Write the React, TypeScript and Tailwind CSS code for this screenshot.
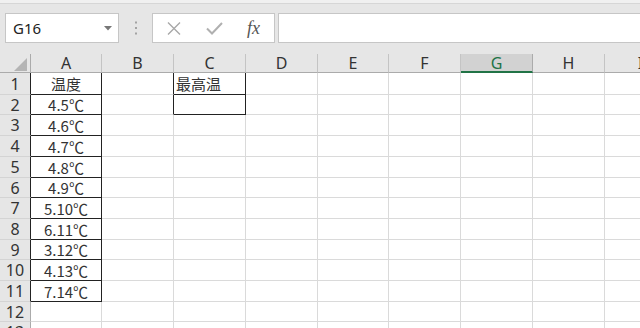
import React from "react";

const colWidths = [71, 72, 72, 72, 71, 72, 72, 72, 72];
const colNames = ["A", "B", "C", "D", "E", "F", "G", "H", "I"];
const rowHeights = [22, 20, 21, 21, 21, 20, 21, 21, 20, 21, 21, 20, 21];
const aVals = ["温度", "4.5℃", "4.6℃", "4.7℃", "4.8℃", "4.9℃", "5.10℃", "6.11℃", "3.12℃", "4.13℃", "7.14℃"];

const cellFont = { fontFamily: '"Noto Sans CJK SC", "Noto Sans", sans-serif' };

function Toolbar() {
  return (
    <div className="h-[54px] bg-[#e6e6e6] flex flex-col">
      <div className="h-[4px] bg-[#f0f0f0] border-b border-[#d6d6d6]" />
      <div className="flex items-start pt-[9px] pl-[5px]">
        <div className="w-[114px] h-[30px] bg-white border border-[#c6c6c6] flex items-center justify-between pl-[7px] pr-[6px]">
          <span className="text-[15px] text-[#222]" style={{ fontFamily: '"Noto Sans", sans-serif' }}>G16</span>
          <svg width="8" height="5" viewBox="0 0 8 5"><path d="M0 0 L8 0 L4 4.5 Z" fill="#777" /></svg>
        </div>
        <div className="w-[33px] h-[30px] flex items-center justify-center">
          <svg width="4" height="14" viewBox="0 0 4 14">
            <rect x="1" y="0.5" width="2" height="2" fill="#a3a3a3" />
            <rect x="1" y="6" width="2" height="2" fill="#a3a3a3" />
            <rect x="1" y="11.5" width="2" height="2" fill="#a3a3a3" />
          </svg>
        </div>
        <div className="w-[123px] h-[30px] bg-white border border-[#c6c6c6] flex items-center">
          <svg className="ml-[14px]" width="14" height="13" viewBox="0 0 14 13">
            <path d="M1 0.5 L13 12.5 M13 0.5 L1 12.5" stroke="#a8a8a8" strokeWidth="1.4" fill="none" />
          </svg>
          <svg className="ml-[25px]" width="17" height="13" viewBox="0 0 17 13">
            <path d="M1 6.5 L6 11.5 L16 1" stroke="#b0b0b0" strokeWidth="2" fill="none" />
          </svg>
          <span className="ml-[24px] text-[18px] italic text-[#555] leading-none" style={{ fontFamily: '"Liberation Serif", serif' }}>fx</span>
        </div>
        <div className="ml-[3px] flex-1 h-[30px] bg-white border border-r-0 border-[#c6c6c6]" />
      </div>
    </div>
  );
}

function HeaderRow() {
  return (
    <div className="flex h-[19px] bg-[#e6e6e6] w-[680px]">
      <div className="w-[31px] shrink-0 h-full border-r border-b border-[#ababab] flex items-end justify-end pr-[3px] pb-[1px]">
        <svg width="13" height="13" viewBox="0 0 13 13"><path d="M13 0 L13 13 L0 13 Z" fill="#b4b4b4" /></svg>
      </div>
      {colNames.map((c, i) => {
        const sel = c === "G";
        return (
          <div
            key={c}
            className={
              sel
                ? "shrink-0 h-full bg-[#d2d2d2] border-r border-[#ababab] border-b-2 border-b-[#217346] flex items-center justify-center text-[16px] text-[#217346]"
                : "shrink-0 h-full border-r border-[#c4c4c4] border-b border-b-[#ababab] flex items-center justify-center text-[16px] text-[#333]"
            }
            style={{ width: colWidths[i], fontFamily: '"Noto Sans", sans-serif' }}
          >
            <span className="leading-none">{c}</span>
          </div>
        );
      })}
    </div>
  );
}

function GridRow({ r }: { r: number }) {
  const h = rowHeights[r];
  const inA = r < 11;
  return (
    <div className="flex w-[680px] shrink-0" style={{ height: h }}>
      <div
        className={
          "w-[31px] shrink-0 h-full bg-[#e6e6e6] border-b border-b-[#d4d4d4] border-r flex items-center justify-center text-[16px] text-[#333] " +
          (inA ? "border-r-[#222]" : "border-r-[#ababab]")
        }
        style={{ fontFamily: '"Noto Sans", sans-serif' }}
      >
        <span className="leading-none">{r + 1}</span>
      </div>
      {colNames.map((c, i) => {
        let rb = "border-r-[#dadada]";
        let bb = "border-b-[#dadada]";
        if (c === "A" && inA) {
          rb = "border-r-[#222]";
          bb = "border-b-[#222]";
        }
        if (c === "B" && r < 2) rb = "border-r-[#222]";
        if (c === "C" && r < 2) {
          rb = "border-r-[#222]";
          bb = "border-b-[#222]";
        }
        let content: React.ReactNode = null;
        let align = "justify-center";
        if (c === "A" && inA) content = aVals[r];
        if (c === "C" && r === 0) {
          content = "最高温";
          align = "justify-start pl-[2px]";
        }
        return (
          <div
            key={c}
            className={"shrink-0 h-full border-r border-b flex items-center text-[15px] text-[#333] " + rb + " " + bb + " " + align}
            style={{ width: colWidths[i], ...cellFont }}
          >
            {content && <span className="leading-none">{content}</span>}
          </div>
        );
      })}
    </div>
  );
}

export default function App() {
  return (
    <div className="w-[640px] h-[328px] overflow-hidden bg-white">
      <Toolbar />
      <HeaderRow />
      {rowHeights.map((_, r) => (
        <GridRow key={r} r={r} />
      ))}
    </div>
  );
}
